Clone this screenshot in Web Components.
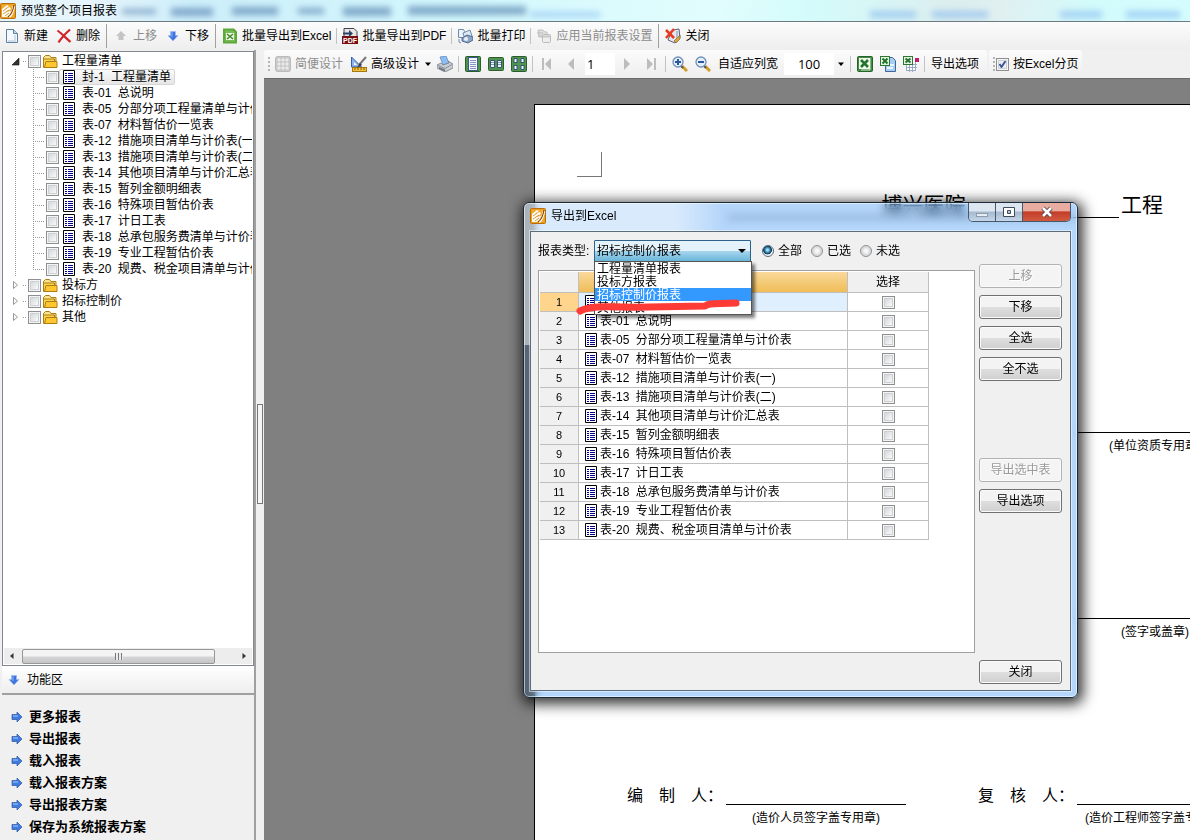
<!DOCTYPE html>
<html lang="zh-CN">
<head>
<meta charset="utf-8">
<title>预览整个项目报表</title>
<style>
html, body { margin: 0; height: 100%; overflow: hidden; }
body { font: 12px/16px "Liberation Sans", "Noto Sans CJK SC", sans-serif; color: #000; background: #f0f0f0; }
</style>
</head>
<body>
<report-app></report-app>
<script>
const ICONS = {
  app: '<rect x=".5" y=".5" width="15" height="15" rx="1" fill="#ef9d1c" stroke="#b8700c"/><path d="M2 2h12v12H2z" fill="#f3a92e"/><path d="M2 6l5-4 2 1-4 3 5-2 1 2-5 3 5-1-1 3-3 3H2z" fill="#fffdf2"/><path d="M3 8l4-3M3 11l6-4M5 13l4-3" stroke="#c8801a" stroke-width=".8"/><path d="M9 14c3-2 4-6 5-11" fill="none" stroke="#fff" stroke-width="2.500"/><path d="M8 14c3-2 5-6 6-12" fill="none" stroke="#8a4808" stroke-width="1.200"/>',
  file: '<path d="M2.500 1.500h7l4 4v9h-11z" fill="#f5f9fd" stroke="#5f7f9f"/><path d="M9.500 1.500v4h4" fill="#c5d8ea" stroke="#5f7f9f"/><path d="M11 7v6H4" fill="none" stroke="#cfdeea" stroke-width="2"/>',
  del: '<path d="M1.500 2.500C6 6 10 10 14.500 14M14 1.500C9 6 6 9 2.500 14.500" fill="none" stroke="#d2232a" stroke-width="2.200"/>',
  up: '<path d="M8 3l5 5h-2.500v4h-5V8H3z" fill="#c4c4c4"/>',
  down: '<path d="M5.500 3.500h5v4H13L8 13 3 7.500h2.500z" fill="#3f74dc" stroke="#9fbcf2" stroke-width=".7"/><path d="M7 4v5" stroke="#8fb4f5"/>',
  right: '<path d="M3 5.500h5V3l5 5-5 5v-2.500H3z" fill="#3f7be0" stroke="#2a55a5" stroke-width=".7"/><path d="M4 7h5" stroke="#a9caf8"/>',
  xls: '<path d="M1 .500h11l3 3v12H1z" fill="#5da83a"/><path d="M3 2.500h8l2 2v9H3z" fill="#78bb55"/><rect x="4" y="5" width="8" height="7" fill="#eef8e6"/><path d="M5 6l6 5M11 6l-6 5" stroke="#3f8d26" stroke-width="1.600"/>',
  pdf: '<path d="M2 .500h10l3 3V15H2z" fill="#e6e6e6" stroke="#444"/><rect x="0" y="8" width="16" height="8" fill="#7a0d10"/><path d="M1 4.500h6V2l4 3.500L7 9V6.500H1z" fill="#2c4567"/><text x="8" y="15" font-family="Liberation Sans" font-size="7" font-weight="bold" fill="#fff" text-anchor="middle">PDF</text>',
  prints: '<path d="M1.500 1.500h5l1 2v6h-6z" fill="#eaf2fa" stroke="#6f8aa8"/><path d="M6 5l7-3 2 6-7 3z" fill="#dfe9f5" stroke="#6f8aa8"/><path d="M5 10l5-3 6 2v3l-5 3-6-2z" fill="#8ba6c8" stroke="#53688a"/><circle cx="9" cy="11" r="2" fill="#e8f0fa"/><path d="M2 11v3l2 1" fill="none" stroke="#6f8aa8"/>',
  apply: '<path d="M2 2h5l2 2h2v5H3z" fill="#dedede" stroke="#c2c2c2"/><path d="M1 5h6M2 8h5" stroke="#bbb"/><rect x="6.500" y="6.500" width="8" height="8" rx="1" fill="#ededed" stroke="#bcbcbc"/><path d="M7 8.500h7" stroke="#c7c7c7" stroke-width="2"/>',
  exit: '<path d="M8 2l6-1 1 9-5 5-7-3 2-5z" fill="#e3e7ef" stroke="#59637a"/><path d="M9 13l6-6v4l-4 4z" fill="#d9a440" stroke="#6b5526" stroke-width=".6"/><path d="M1 2l8 8M9 1L1 10" stroke="#e83a20" stroke-width="2.600"/><path d="M12 3v7" stroke="#8994ad"/>',
  grid: '<rect x=".5" y=".5" width="15" height="15" rx="2" fill="#c9c9c9" stroke="#bbb"/><path d="M3 3h2v2H3zM7 3h2v2H7zM11 3h2v2h-2zM3 7h2v2H3zM7 7h2v2H7zM11 7h2v2h-2zM3 11h2v2H3zM7 11h2v2H7zM11 11h2v2h-2z" fill="#f6f6f6" stroke="#e6e6e6"/>',
  design: '<path d="M.500 1v10h10z" fill="#8db2ec" stroke="#2f5fae"/><path d="M3 6v3h3z" fill="#fff"/><rect x="1.500" y="11.500" width="14" height="4" fill="#f0bf3c" stroke="#a8780f"/><path d="M4 12v2M7 12v2M10 12v2M13 12v2" stroke="#8a6108"/><path d="M15 1L8 9" stroke="#7a7a7a" stroke-width="2"/><path d="M9 7l-3 5 5-3z" fill="#3b3b3b"/>',
  printer: '<path d="M3 1l6-1 3 7-6 2z" fill="#8dbcf2" stroke="#5683bd" stroke-width=".7"/><path d="M0 9l4-2 2 2 6-2-1-2 5 3v4l-8 4-8-4z" fill="#c8ccd3" stroke="#777d88" stroke-width=".8"/><path d="M1 9.500l7 3 7-4" fill="none" stroke="#8b919d"/><path d="M2 11l6 2.500v2L2 13z" fill="#6f7580"/>',
  one: '<rect x=".5" y=".5" width="15" height="15" rx="1" fill="#4f934f" stroke="#275f2b"/><rect x="3.500" y="1.500" width="9" height="13" fill="#f2f6ff" stroke="#3c5b86"/><path d="M5 4.500h6M5 6.500h6M5 8.500h6M5 10.500h6M5 12.500h6" stroke="#8797c2"/>',
  two: '<rect x=".5" y="1.500" width="15" height="13" rx="1" fill="#4f934f" stroke="#275f2b"/><path d="M2.500 4.500h4v7h-4zM9.500 4.500h4v7h-4z" fill="#eef3ff" stroke="#35527d"/><path d="M3 6.500h3M3 8.500h3M10 6.500h3M10 8.500h3" stroke="#8797c2"/>',
  four: '<rect x=".5" y=".5" width="15" height="15" rx="1" fill="#4f934f" stroke="#275f2b"/><path d="M3 2.500h3v4H3zM10 2.500h3v4h-3zM3 9.500h3v4H3zM10 9.500h3v4h-3z" fill="#f3f6ff" stroke="#35527d"/>',
  first: '<path d="M3 2h2v12H3zM12 2v12L6 8z" fill="#bdbdbd"/>',
  prev: '<path d="M11 2v12L5 8z" fill="#bdbdbd"/>',
  next: '<path d="M5 2v12l6-6z" fill="#bdbdbd"/>',
  last: '<path d="M11 2h2v12h-2zM4 2v12l6-6z" fill="#bdbdbd"/>',
  zoomin: '<path d="M10 10l5 5" stroke="#d49d28" stroke-width="3"/><path d="M9 10l2 2" stroke="#555" stroke-width="2"/><circle cx="6" cy="6" r="5" fill="#e3effb" stroke="#7390b8" stroke-width="1.300"/><path d="M6 3v6M3 6h6" stroke="#2d56a0" stroke-width="2"/>',
  zoomout: '<path d="M10 10l5 5" stroke="#d49d28" stroke-width="3"/><path d="M9 10l2 2" stroke="#555" stroke-width="2"/><circle cx="6" cy="6" r="5" fill="#e3effb" stroke="#7390b8" stroke-width="1.300"/><path d="M3 6h6" stroke="#2d56a0" stroke-width="2"/>',
  excel: '<rect x=".5" y=".5" width="15" height="15" rx="1" fill="#3f8b3f" stroke="#256328"/><path d="M13 2v12H4" fill="none" stroke="#cfe5cc"/><rect x="2" y="2" width="11" height="11" fill="#f0f7ee"/><path d="M4 4l7 7M11 4l-7 7" stroke="#23742c" stroke-width="2.600"/>',
  excelcopy: '<path d="M5.500 1.500h7l3 3v11h-10z" fill="#a9cdf3" stroke="#41669b"/><path d="M7 12h6M7 9h7" stroke="#edf5ff" stroke-width="2"/><rect x=".5" y=".5" width="9" height="9" fill="#e7f3e5" stroke="#2c7731"/><path d="M2.500 2.500l5 5M7.500 2.500l-5 5" stroke="#23742c" stroke-width="2"/>',
  excelgrid: '<path d="M3 6h11v9H3z" fill="#fff"/><path d="M3 8.500h11M3 11.500h11M3 14.500h10M3.500 6v9M6.500 6v10M9.500 6v10M12.500 6v9" stroke="#9aa9c8"/><rect x=".5" y=".5" width="9" height="8" fill="#e7f3e5" stroke="#2c7731"/><path d="M2.500 2.500l5 4M7.500 2.500l-5 4" stroke="#23742c" stroke-width="2"/><rect x="12" y="2" width="4" height="4" fill="#c51a6c"/>',
  folder: '<path d="M1.500 5V3.500l2-2h4l1.500 2h5v3" fill="#fbe28c" stroke="#b07c10"/><path d="M1.500 13.500V5h11v2h2v6.500z" fill="#f9d54f" stroke="#b07c10"/><path d="M4 7.500h11v6H2.500z" fill="#ffc833" stroke="#b07c10"/>',
  sheet: '<path d="M2.500 1.500h11v13h-11z" fill="#fff" stroke="#000"/><path d="M4 4.500h2M7 4.500h5M4 6.500h2M7 6.500h5M4 8.500h2M7 8.500h5M4 10.500h2M7 10.500h5M4 12.500h2M7 12.500h5" stroke="#00008b"/>',
  open: '<path d="M11 5v7H4z" fill="#333" stroke="#111" stroke-width=".6"/>',
  closed: '<path d="M5.500 4.500v7L9.500 8z" fill="#fff" stroke="#999"/>',
  caret: '<path d="M5 6.500h6L8 10z" fill="#000"/>',
  left: '<path d="M9.500 5v6L6 8z" fill="#333"/>',
  rightsmall: '<path d="M6.500 5v6L10 8z" fill="#333"/>'
};

const CHECK = `
input[type=checkbox] { appearance: none; margin: 0; width: 13px; height: 13px; box-sizing: border-box; flex: none;
  border: 1px solid #8e8f8f; background: linear-gradient(135deg, #c9cdd4, #f6f6f6 75%); box-shadow: inset 0 0 0 1px #f4f4f4, inset 0 0 0 2px #cdd0d4; }
input[type=checkbox]:checked { background: url("data:image/svg+xml,%3Csvg xmlns='http://www.w3.org/2000/svg' viewBox='0 0 11 11'%3E%3Cpath d='M2.500 5l2 3 4-6' fill='none' stroke='%233a57a0' stroke-width='2'/%3E%3C/svg%3E") center/11px no-repeat, #eee; }`;

const define = (name, html, setup) => customElements.define(name, class extends HTMLElement {
  constructor() {
    super();
    this.attachShadow({ mode: 'open' });
  }
  connectedCallback() {
    const t = document.createElement('template');
    t.innerHTML = typeof html === 'function' ? html(this) : html;
    this.shadowRoot.replaceChildren(t.content.cloneNode(true));
    if (setup) setup(this);
  }
});

define('ui-icon', el => `
<style>:host { display: inline-block; width: 16px; height: 16px; flex: none } svg { display: block; width: 100%; height: 100% }</style>
<svg viewBox="0 0 16 16" aria-hidden="true">${ICONS[el.getAttribute('name')]}</svg>`);

/* Tool bar button: an icon, a label, or both. */
define('tool-button', el => `
<style>
:host { display: flex; flex: none }
button { display: flex; align-items: center; justify-content: center; gap: 4px; margin: 0; padding: 0 4px; height: 22px; border: 0; background: none; font: inherit; color: inherit; white-space: nowrap }
button:disabled { color: #8d8d8d }
:host([only]) button { width: 23px; padding: 0 }
:host([nav]) button { width: 24px; padding: 0 }
:host([slim]) button { width: 14px; padding: 0 }
:host([menu]) button { padding-right: 0 }
ui-icon[name=caret] { margin: 0 -3px }
</style>
<button type="button" ${el.hasAttribute('disabled') ? 'disabled' : ''} aria-label="${el.getAttribute('hint') || el.textContent.trim()}">
${el.hasAttribute('icon') ? `<ui-icon name="${el.getAttribute('icon')}"></ui-icon>` : ''}<slot></slot>${el.hasAttribute('menu') ? '<ui-icon name="caret"></ui-icon>' : ''}</button>`);

define('tool-sep', `<style>:host { display: block; flex: none; width: 1px; height: 16px; margin: 0 2px; background: #c2c2c2 } :host([tall]) { height: 24px; background: #a0a0a0 }</style>`);

define('title-bar', `
<style>
:host { display: flex; align-items: center; position: relative; overflow: hidden; gap: 5px; height: 21px; border-bottom: 1px solid #6d7a80;
  background: linear-gradient(100deg, #e6f4fb 0 8%, #cdeefa 16%, #d3f8fd 40%, #e2fdfd 60%, #d4fbfb 68%, #dceeee 80%, #e0f0f1 84%, #d2fbfb 92%, #d6fdfd) }
ui-icon { position: relative }
span { position: relative; line-height: 20px }
.haze { position: absolute; inset: 0; width: 100%; height: 21px; filter: blur(3px) }
</style>
<svg class="haze" aria-hidden="true"><g fill="#31619a" fill-opacity=".5"><rect x="122" y="9" width="34" height="5"/><rect x="171" y="8" width="42" height="8"/><rect x="232" y="7" width="46" height="8"/><rect x="298" y="8" width="26" height="6"/><rect x="343" y="7" width="48" height="9"/><rect x="408" y="6" width="118" height="9"/></g><g fill="#6faaf0" fill-opacity=".5"><rect x="530" y="12" width="70" height="5"/><rect x="870" y="11" width="46" height="7"/><rect x="932" y="11" width="56" height="7"/><rect x="1060" y="11" width="42" height="7"/><rect x="1126" y="11" width="54" height="7"/></g></svg>
<ui-icon name="app"></ui-icon><span>预览整个项目报表</span>`);

define('main-tools', `
<style>:host { display: flex; align-items: center; height: 28px; background: linear-gradient(#fcfcfc, #eeeeee) } tool-sep:not([tall]) { margin: 0 1px }</style>
<tool-button icon="file">新建</tool-button><tool-button icon="del">删除</tool-button>
<tool-sep tall></tool-sep>
<tool-button icon="up" disabled>上移</tool-button><tool-button icon="down">下移</tool-button>
<tool-sep tall></tool-sep>
<tool-button icon="xls">批量导出到Excel</tool-button><tool-sep></tool-sep>
<tool-button icon="pdf">批量导出到PDF</tool-button><tool-sep></tool-sep>
<tool-button icon="prints">批量打印</tool-button><tool-sep></tool-sep>
<tool-button icon="apply" disabled>应用当前报表设置</tool-button>
<tool-sep tall></tool-sep>
<tool-button icon="exit">关闭</tool-button>`);

define('preview-tools', `
<style>
${CHECK}
:host { display: flex; gap: 2px; height: 28px; background: #f0f0f0; border-bottom: 1px solid #6a6a6a; overflow: hidden }
.strip { display: flex; align-items: center; flex: none; background: linear-gradient(#fcfcfc, #eeeeee); border-radius: 3px; padding-right: 4px }
.grip { width: 2px; height: 14px; margin: 0 1px 0 4px; background: repeating-linear-gradient(#b5b5b5 0 2px, transparent 2px 4px) }
input[type=text] { box-sizing: border-box; height: 22px; border: 0; background: #fff; font: 13px/20px "Open Sans", sans-serif; padding: 0 2px; margin: 0 0 0 2px }
.page { width: 30px }
.zoom { width: 50px; text-align: center }
label { display: flex; align-items: center; gap: 4px }
</style>
<div class="strip"><i class="grip"></i>
<tool-button icon="grid" disabled>简便设计</tool-button><tool-button icon="design" menu>高级设计</tool-button>
<tool-button icon="printer" only hint="打印"></tool-button><tool-sep></tool-sep>
<tool-button icon="one" only hint="单页"></tool-button><tool-button icon="two" only hint="双页"></tool-button><tool-button icon="four" only hint="四页"></tool-button><tool-sep></tool-sep>
<tool-button icon="first" nav disabled hint="首页"></tool-button><tool-button icon="prev" nav disabled hint="上一页"></tool-button>
<input type="text" class="page" value="1" aria-label="页码">
<tool-button icon="next" nav disabled hint="下一页"></tool-button><tool-button icon="last" nav disabled hint="末页"></tool-button><tool-sep></tool-sep>
<tool-button icon="zoomin" only hint="放大"></tool-button><tool-button icon="zoomout" only hint="缩小"></tool-button>
<tool-button>自适应列宽</tool-button>
<input type="text" class="zoom" value="100" aria-label="缩放比例"><tool-button icon="caret" slim hint="选择缩放比例"></tool-button>
<tool-sep></tool-sep>
<tool-button icon="excel" only hint="导出到Excel"></tool-button><tool-button icon="excelcopy" only hint="导出到已有Excel"></tool-button><tool-button icon="excelgrid" only hint="导出表格"></tool-button>
<tool-sep></tool-sep><tool-button>导出选项</tool-button></div>
<div class="strip"><i class="grip"></i><label><input type="checkbox" checked>按Excel分页</label></div>`);

const REPORTS = ['表-01 总说明', '表-05 分部分项工程量清单与计价表', '表-07 材料暂估价一览表', '表-12 措施项目清单与计价表(一)', '表-13 措施项目清单与计价表(二)', '表-14 其他项目清单与计价汇总表', '表-15 暂列金额明细表', '表-16 特殊项目暂估价表', '表-17 计日工表', '表-18 总承包服务费清单与计价表', '表-19 专业工程暂估价表', '表-20 规费、税金项目清单与计价表'];

define('report-name', el => {
  const [code, name] = el.getAttribute('text').split(' ');
  return `<style>:host { white-space: nowrap } span { margin-right: 3px }</style><span>${code}</span> ${name}`;
});

define('report-tree', `
<style>
${CHECK}
:host { display: flex; flex-direction: column; background: #fff; border: 1px solid #828790; overflow: hidden }
.view { flex: 1; overflow: hidden; margin: 0 1px; padding-top: 1px }
ul { list-style: none; margin: 0; padding: 0 }
.row { display: flex; align-items: center; height: 16px; white-space: nowrap }
.dots { width: 4px; height: 1px; flex: none; background: repeating-linear-gradient(90deg, #999 0 1px, transparent 1px 2px) }
.root { padding-left: 4px }
.root > .dots { margin-right: 1px; margin-left: -1px }
.root > label { margin-left: 4px }
.root > ui-icon.fold { margin-left: 1px; margin-top: 2px }
.kids { margin-left: 11px; padding-left: 18px; background: repeating-linear-gradient(#999 0 1px, transparent 1px 2px) 0 0/1px 100% no-repeat }
.kids li { background: repeating-linear-gradient(#999 0 1px, transparent 1px 2px) 0 0/1px 100% no-repeat }
.kids li:last-child { background-size: 1px 8px }
.kids .dots { width: 11px; margin-right: 2px }
.kids label { display: flex; align-items: center; height: 14px; padding: 0 3px 0 1px; gap: 5px; border: 1px solid transparent; border-radius: 2px }
.kids label.on { background: linear-gradient(#fafafa, #e6e6e6); border-color: #d6d6d6 }
.scroll { display: flex; align-items: center; height: 16px; margin: 0 1px 1px; background: #ededed; flex: none }
.thumb { flex: 0 1 191px; height: 13px; margin: 0 auto 0 2px; border: 1px solid #979797; border-radius: 2px; background: linear-gradient(#f4f4f4 0 48%, #d6d6d6 52%, #c5c5c8); display: flex; align-items: center; justify-content: center }
.thumb i { width: 8px; height: 7px; background: repeating-linear-gradient(90deg, #777 0 1px, #eee 1px 3px) }
</style>
<div class="view"><ul>
<li><div class="row root"><ui-icon name="open"></ui-icon><i class="dots"></i><input type="checkbox" id="a"><ui-icon class="fold" name="folder"></ui-icon><label for="a">工程量清单</label></div>
<ul class="kids"></ul></li>
<li><div class="row root"><ui-icon name="closed"></ui-icon><i class="dots"></i><input type="checkbox" id="b"><ui-icon class="fold" name="folder"></ui-icon><label for="b">投标方</label></div></li>
<li><div class="row root"><ui-icon name="closed"></ui-icon><i class="dots"></i><input type="checkbox" id="c"><ui-icon class="fold" name="folder"></ui-icon><label for="c">招标控制价</label></div></li>
<li><div class="row root"><ui-icon name="closed"></ui-icon><i class="dots"></i><input type="checkbox" id="d"><ui-icon class="fold" name="folder"></ui-icon><label for="d">其他</label></div></li>
</ul></div>
<div class="scroll"><ui-icon name="left"></ui-icon><div class="thumb"><i></i></div><ui-icon name="rightsmall"></ui-icon></div>`, el => {
  el.shadowRoot.querySelector('.kids').innerHTML = ['封-1 工程量清单', ...REPORTS].map((r, i) =>
    `<li class="row"><i class="dots"></i><input type="checkbox" id="r${i}"><label for="r${i}" class="${i ? '' : 'on'}"><ui-icon name="sheet"></ui-icon><report-name text="${r}"></report-name></label></li>`).join('');
});

define('task-panel', `
<style>
:host { display: block; background: #f0f0f0 }
h2 { display: flex; align-items: center; gap: 5px; height: 27px; margin: 0; padding-left: 4px; font: inherit; background: linear-gradient(#fff, #eee); border-bottom: 2px solid #a0a0a0 }
ul { list-style: none; margin: 0; padding: 11px 0 2px 7px }
li { height: 22px; display: flex; align-items: center }
a { display: flex; align-items: center; gap: 4px; color: #000; font-size: 13px; font-weight: bold; text-decoration: none }
</style>
<h2><ui-icon name="down"></ui-icon>功能区</h2>
<ul>${['更多报表', '导出报表', '载入报表', '载入报表方案', '导出报表方案', '保存为系统报表方案'].map(t => `<li><a href="#"><ui-icon name="right"></ui-icon>${t}</a></li>`).join('')}</ul>`);

/* The sheet of paper in the preview area. */
define('report-page', `
<style>
:host { display: block; width: 794px; min-height: 1100px; box-sizing: border-box; background: #fff; border: 1px solid #000 }
.corner { width: 24px; height: 24px; margin: 47px 0 0 42px; border: solid #777; border-width: 0 1px 1px 0 }
.head { display: flex; align-items: flex-end; margin: 13px 0 0 193px; font-size: 21px; line-height: 26px; gap: 2px }
.head b { flex: none; width: 391px; font-weight: normal; text-align: center; border-bottom: 1px solid #000; height: 27px; line-height: 30px }
.sign { display: grid; grid-template-columns: 99px 180px 72px 99px 180px; grid-auto-rows: 186px; margin: 191px 0 0 92px }
.label { font-size: 16px; line-height: 30px; white-space: nowrap }
.line { grid-column: 5 }
.line.left { grid-column: 2 }
.line::before { content: ""; display: block; height: 23px; border-bottom: 1px solid #000 }
.line span { display: block; width: 156px; line-height: 26px; text-align: center; white-space: nowrap }
.line.left span { width: 100% }
</style>
<div class="corner"></div>
<div class="head"><b>博兴医院</b><span>工程</span></div>
<div class="sign">
<div class="line"><span>(单位资质专用章)</span></div>
<div class="line"><span>(签字或盖章)</span></div>
<div class="label">编　制　人：</div><div class="line left"><span>(造价人员签字盖专用章)</span></div><i></i>
<div class="label">复　核　人：</div><div class="line"><span>(造价工程师签字盖专用章)</span></div>
</div>`);

define('push-button', el => `
<style>
:host { display: block }
button { display: block; width: 100%; height: 24px; margin: 0; padding: 0; font: inherit; color: #000; border: 1px solid #707070; border-radius: 3px; background: linear-gradient(#f3f3f3 0 48%, #dedede 52%, #cfcfcf); box-shadow: inset 0 0 0 1px #fbfbfb }
button:disabled { color: #9a9a9a; border-color: #b2b2b2; background: #f4f4f4; text-shadow: 1px 1px #fff }
</style>
<button type="button" ${el.hasAttribute('disabled') ? 'disabled' : ''}><slot></slot></button>`);

define('type-picker', `
<style>
:host { display: block; position: relative; width: 157px }
select { appearance: none; display: block; box-sizing: border-box; width: 100%; height: 22px; margin: 0; padding: 0 2px; font: inherit; color: #000; border: 1px solid #2c628b; border-radius: 1px;
  background: url("data:image/svg+xml,%3Csvg xmlns='http://www.w3.org/2000/svg' viewBox='0 0 8 4'%3E%3Cpath d='M0 0h8L4 4z'/%3E%3C/svg%3E") right 4px center/8px 4px no-repeat, linear-gradient(#e4f3fb 0 48%, #a5d6ee 52%, #6ab5d8) }
ul { position: absolute; z-index: 2; top: 21px; left: 0; right: -1px; margin: 0; padding: 0; list-style: none; background: #fff; border: 1px solid #555; box-shadow: 3px 3px 3px rgba(0,0,0,.5) }
li { height: 13px; line-height: 15px; padding-left: 2px; overflow: hidden }
li[aria-selected=true] { background: #3399ff; color: #fff }
svg { position: absolute; z-index: 3; left: -20px; top: 55px; width: 168px; height: 20px }
</style>
<select id="type" aria-label="报表类型"><option>招标控制价报表</option></select>
<ul role="listbox"><li role="option">工程量清单报表</li><li role="option">投标方报表</li><li role="option" aria-selected="true">招标控制价报表</li><li role="option">其他报表</li></ul>
<svg viewBox="0 0 168 20" aria-hidden="true"><path d="M6 16C20 9 45 13 75 12l56-1c4-3 8-2 31-3" fill="none" stroke="#ff3b38" stroke-width="7" stroke-linecap="round" stroke-linejoin="round"/></svg>`);

define('report-table', `
<style>
${CHECK}
:host { display: block; background: #fff; border: 1px solid #a0a0a0; padding: 1px; overflow: hidden }
table { border-collapse: separate; border-spacing: 0; table-layout: fixed; width: 389px }
th, td { box-sizing: border-box; height: 19px; padding: 0; font-weight: normal; text-align: center; border: solid #bfbfbf; border-width: 0 1px 1px 0 }
thead th { height: 21px; background: #f0f0f0 }
tbody th { background: #f0f0f0; line-height: 16px; font-size: 11px }
.no { width: 39px } .pick { width: 81px }
thead .name { background: linear-gradient(#f9d99b, #f0bd58) }
tr.on th { background: #ffd58d } tr.on td:nth-child(2) { background: #e0effe }
.cell { display: flex; align-items: center; gap: 1px; padding-left: 4px; height: 18px }
input[type=checkbox] { display: block; margin: 0 auto }
</style>
<table><thead><tr><th class="no"></th><th class="name"></th><th class="pick">选择</th></tr></thead><tbody></tbody></table>`, el => {
  el.shadowRoot.querySelector('tbody').innerHTML = ['', ...REPORTS].map((r, i) =>
    `<tr class="${i ? '' : 'on'}"><th scope="row">${i + 1}</th><td><div class="cell"><ui-icon name="sheet"></ui-icon>${r ? `<report-name text="${r}"></report-name>` : ''}</div></td><td><input type="checkbox" aria-label="选择第${i + 1}行"></td></tr>`).join('');
});

define('export-dialog', `
<style>
:host { position: absolute; left: 523px; top: 202px; display: flex; flex-direction: column; box-sizing: border-box; width: 555px; height: 496px; border: 1px solid #1d2b38; border-radius: 6px;
  background: linear-gradient(90deg, rgba(255,255,255,.5) 0 150px, transparent 200px) 0 0/100% 142px no-repeat, linear-gradient(90deg, rgba(70,50,30,.35) 0 8px, transparent 14px), rgba(26,132,240,.33); backdrop-filter: blur(4px);
  box-shadow: inset 0 0 0 1px rgba(255,255,255,.55), 2px 3px 14px 3px rgba(0,0,0,.8) }
header { display: flex; height: 28px; flex: none; padding: 0 6px }
.caption { display: flex; align-items: center; gap: 5px; height: 26px }
.win { display: flex; margin-left: auto; height: 18px; border: 1px solid #46586c; border-top: 0; border-radius: 0 0 5px 5px; overflow: hidden }
.win button { width: 27px; margin: 0; padding: 0; border: 0; border-right: 1px solid #46586c; background: linear-gradient(#dbe6f1 0 45%, #a5b8cc 50%, #c5d8eb); display: grid; place-items: center }
.win .x { width: 47px; border-right: 0; background: linear-gradient(#e8aca0 0 42%, #c43d28 50%, #d05a40) }
.win svg { width: 14px; height: 12px }
main { flex: 1; display: grid; grid-template-columns: 1fr 83px; gap: 4px; margin: 0 6px 6px; padding: 8px 8px 6px 7px; background: #f0f0f0; border: 1px solid #5b6c7d; box-shadow: 0 0 0 1px rgba(255,255,255,.5) }
.left { display: flex; flex-direction: column; gap: 8px; min-width: 0 }
.form { display: flex; align-items: center; height: 22px; white-space: nowrap }
.form > label:first-child { width: 56px }
.form .opt { display: flex; align-items: center; gap: 4px; margin-right: 9px }
type-picker + .opt { margin-left: 11px }
input[type=radio] { appearance: none; width: 12px; height: 12px; box-sizing: border-box; margin: 0; border: 1px solid #8e8f8f; border-radius: 50%; background: radial-gradient(#f8f8f8 20%, #d4d7da 60%, #fff) }
input[type=radio]:checked { border-color: #55697c; background: radial-gradient(circle at 45% 40%, #9be2f8 0 10%, #1b5c86 40%, #0c3755 50%, #eef2f4 58%) }
report-table { flex: 1; margin-bottom: 31px }
.right { display: flex; flex-direction: column; gap: 7px; padding-top: 24px }
.gap { margin-top: 70px } .end { margin-top: auto }
</style>
<header><div class="caption"><ui-icon name="app"></ui-icon>导出到Excel</div>
<div class="win"><button type="button" aria-label="最小化"><svg viewBox="0 0 14 12"><rect x="1.500" y="7.500" width="11" height="3" fill="#e7edf4" stroke="#8e9cab"/></svg></button><button type="button" aria-label="最大化"><svg viewBox="0 0 14 12"><path d="M1.500 1.500h11v9h-11zM5.500 4.500v3h3v-3z" fill="#fff" fill-rule="evenodd" stroke="#3f4b58"/></svg></button><button type="button" class="x" aria-label="关闭窗口"><svg viewBox="0 0 14 12"><path d="M3 2l8 8M11 2l-8 8" stroke="#5a4650" stroke-width="4.500"/><path d="M3 2l8 8M11 2l-8 8" stroke="#fff" stroke-width="2.500"/></svg></button></div></header>
<main><div class="left"><div class="form"><label>报表类型:</label><type-picker></type-picker>
<label class="opt"><input type="radio" name="scope" checked>全部</label><label class="opt"><input type="radio" name="scope">已选</label><label class="opt"><input type="radio" name="scope">未选</label></div>
<report-table></report-table></div>
<div class="right"><push-button disabled>上移</push-button><push-button>下移</push-button><push-button>全选</push-button><push-button>全不选</push-button>
<push-button class="gap" disabled>导出选中表</push-button><push-button>导出选项</push-button><push-button class="end">关闭</push-button></div></main>`);

define('report-app', `
<style>
:host { display: flex; flex-direction: column; height: 100vh; min-height: 0; position: relative; overflow: hidden }
.work { flex: 1; display: flex; min-height: 0 }
.side { flex: none; width: 252px; display: flex; flex-direction: column; padding: 1px 0 0 2px }
report-tree { flex: 1; min-height: 0 }
.split { flex: none; display: grid; align-items: center; border-left: 2px solid #a0a0a0; padding: 0 1px; width: 6px }
.split i { box-sizing: border-box; height: 100px; margin-bottom: -18px; border: 1px solid #777; background: #f5f5f5 }
.preview { flex: 1; min-width: 0; display: flex; flex-direction: column }
.canvas { flex: 1; min-height: 0; overflow: hidden; background: #808080; padding: 25px 0 0 270px }
</style>
<title-bar></title-bar><main-tools></main-tools>
<div class="work"><div class="side"><report-tree></report-tree><task-panel></task-panel></div>
<div class="split"><i></i></div>
<div class="preview"><preview-tools></preview-tools><div class="canvas"><report-page></report-page></div></div></div>
<export-dialog></export-dialog>`);
</script>
</body>
</html>
